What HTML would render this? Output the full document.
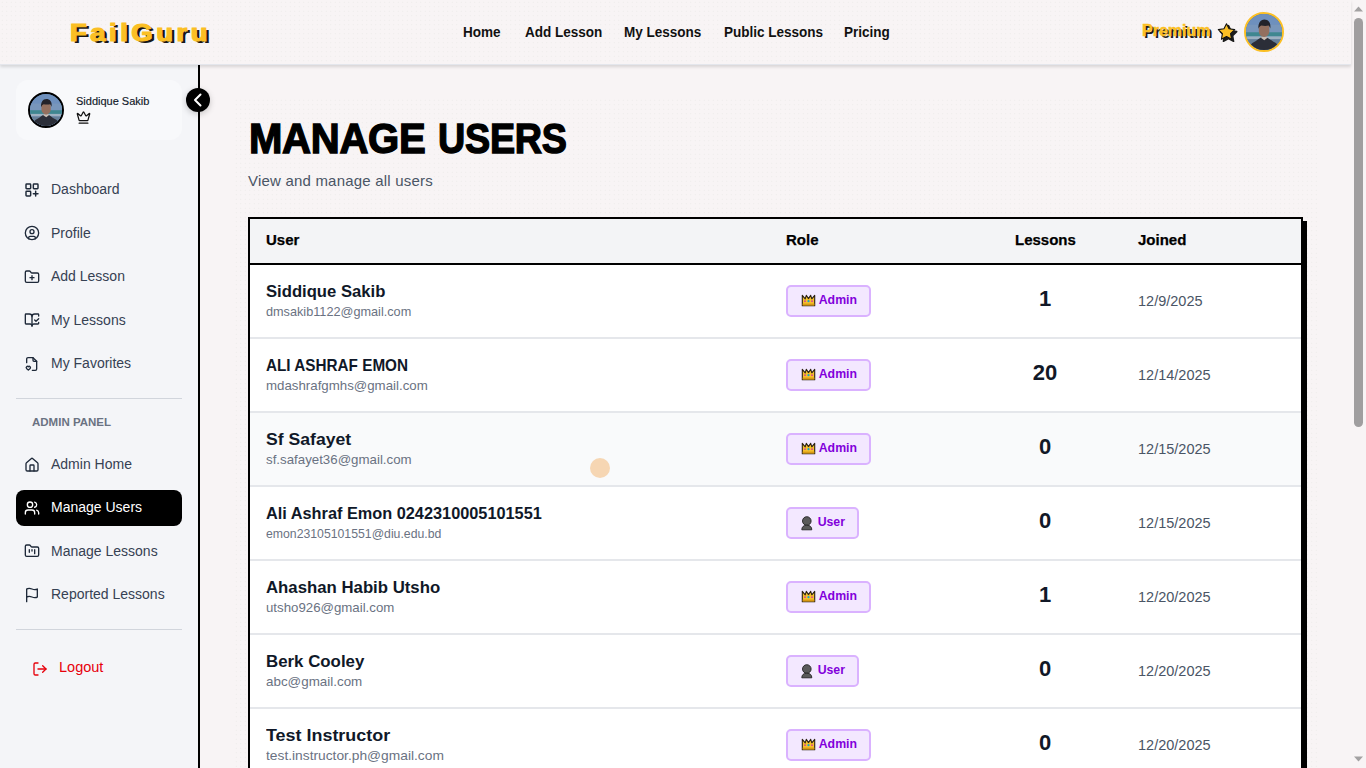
<!DOCTYPE html>
<html><head><meta charset="utf-8">
<style>
*{box-sizing:border-box;margin:0;padding:0}
html,body{width:1366px;height:768px;overflow:hidden;background:#f8f4f5;font-family:"Liberation Sans",sans-serif;color:#111827}
.dots{background-image:radial-gradient(circle at 50% 50%, rgba(0,0,0,0.05) 0.6px, transparent 0.9px);background-size:4.5px 4.5px}
#header{position:absolute;left:0;top:0;width:1351px;height:65px;background-color:#f8f4f5;border-bottom:1px solid #e4e6ec;box-shadow:0 2px 3px rgba(0,0,0,0.13);z-index:5}
#logo{position:absolute;left:70px;top:18px;font-size:24px;font-weight:bold;color:#fbbf24;letter-spacing:3px;text-shadow:2.5px 2px 0 #161616;line-height:30px;-webkit-text-stroke:1.1px #fbbf24;transform:scaleX(1.15);transform-origin:0 0;white-space:nowrap}
.nav{position:absolute;top:22.5px;font-size:14px;font-weight:bold;color:#111;line-height:18px;white-space:nowrap;transform:scaleX(0.965);transform-origin:0 0}
#premium{position:absolute;left:1142px;top:21px;font-size:16px;font-weight:bold;color:#fbbf24;text-shadow:2px 2px 0 #1a1a1a;line-height:20px;-webkit-text-stroke:0.4px #fbbf24}
#havatar{position:absolute;left:1244px;top:12px;width:40px;height:40px;border-radius:50%;border:2.5px solid #fbbf24;overflow:hidden;background:#4a6a8c}
#scroll{position:absolute;left:1351px;top:0;width:15px;height:768px;background:#f8f4f5}
#thumb{position:absolute;left:3px;top:18px;width:9px;height:409px;border-radius:5px;background:#a09e9f}
#sidebar{position:absolute;left:0;top:65px;width:198px;height:703px;background:#f4f5f8}
#sideline{position:absolute;left:198px;top:65px;width:2px;height:703px;background:#000;z-index:3}
#card{position:absolute;left:16px;top:15px;width:166px;height:60px;border-radius:12px;background:#f8f9fb}
#savatar{position:absolute;left:12px;top:12px;width:36px;height:36px;border-radius:50%;border:2px solid #000;overflow:hidden;background:#4a6a8c}
#sname{position:absolute;left:60px;top:15px;font-size:11px;color:#101828;-webkit-text-stroke:0.15px #101828;line-height:13px;white-space:nowrap}
#toggle{position:absolute;left:186px;top:88px;width:24px;height:24px;border-radius:50%;background:#000;z-index:6;box-shadow:0 2px 6px rgba(0,0,0,0.2)}
.item{position:absolute;left:16px;width:166px;height:36px;border-radius:8px;color:#364153;font-size:14px;line-height:35px;white-space:nowrap}
.item svg{position:absolute;left:8px;top:9.5px;width:16px;height:16px;color:#1e2939}
.item.active svg{color:#fff}
.item span{position:absolute;left:35px;top:0}
.item.active{background:#000;color:#fff}
.divider{position:absolute;left:16px;width:166px;height:1px;background:#d1d5dc}
#adminlbl{position:absolute;left:32px;top:350px;font-size:11.5px;font-weight:bold;color:#6a7282;line-height:14px;letter-spacing:0}
#main{position:absolute;left:200px;top:65px;width:1151px;height:703px}
#container{position:absolute;left:34px;top:33px;width:1084px;height:700px}
#title{position:absolute;left:249px;top:114px;font-size:42.5px;font-weight:bold;color:#000;letter-spacing:-0.3px;line-height:50px;white-space:nowrap;-webkit-text-stroke:1.4px #000;transform:scaleX(0.943);transform-origin:0 0}
#title2{position:absolute;left:438px;top:114px;font-size:42.5px;font-weight:bold;color:#000;letter-spacing:-0.3px;line-height:50px;white-space:nowrap;-webkit-text-stroke:1.4px #000;transform:scaleX(0.888);transform-origin:0 0}
#subtitle{position:absolute;left:248px;top:172px;font-size:15px;letter-spacing:0.2px;color:#4a5565;line-height:18px;white-space:nowrap}
#table{position:absolute;left:248px;top:217px;width:1055px;height:600px;border:2px solid #000;box-shadow:4px 4px 0 #000;background:#fff}
#thead{position:absolute;left:0;top:0;width:1051px;height:46px;background:#f3f4f6;border-bottom:2px solid #000}
.th{position:absolute;top:12px;font-size:15px;font-weight:bold;color:#000;-webkit-text-stroke:0.25px #000;line-height:18px}
.row{position:absolute;left:0;width:1051px;height:74px;border-bottom:2px solid #e5e7eb;background:#fff}
.row.hover{background:#f9fafb}
.uname{position:absolute;left:16px;top:16px;transform-origin:0 0;font-size:16.5px;font-weight:bold;color:#101828;line-height:20px;white-space:nowrap}
.email{position:absolute;left:16px;top:39px;transform-origin:0 0;font-size:12.7px;color:#6a7282;line-height:16px;white-space:nowrap}
.badge{position:absolute;left:536px;top:20px;height:32px;border:2px solid #dab2ff;border-radius:5px;background:#f3e8ff;color:#8200db;font-size:12.3px;font-weight:bold;line-height:28px;padding-left:13px;padding-right:12px;white-space:nowrap}
.badge svg{position:absolute;left:13px;top:7px}
.badge span{position:absolute;right:12px;top:-1px}
.num{position:absolute;left:718px;width:154px;top:22px;text-align:center;font-size:22px;font-weight:bold;color:#111827;line-height:24px}
.date{position:absolute;left:888px;top:26.5px;font-size:14.5px;color:#4a5565;line-height:18px;white-space:nowrap}
#cursor{position:absolute;left:590px;top:458px;width:20px;height:20px;border-radius:50%;background:#f6d6b3;z-index:10}
#crown{position:absolute;left:60px;top:30px;width:15px;height:15px;color:#111}
#logout{position:absolute;left:16px;top:586px;width:166px;height:36px;color:#e7000b;font-size:14.5px;line-height:36px}
#logout svg{position:absolute;left:16px;top:10px;width:16px;height:16px}
#logout span{position:absolute;left:43px;top:-2px}
</style></head>
<body>
<div id="header" class="dots">
  <div id="logo">FailGuru</div>
  <div class="nav" style="left:463px">Home</div>
  <div class="nav" style="left:525px">Add Lesson</div>
  <div class="nav" style="left:624px">My Lessons</div>
  <div class="nav" style="left:724px">Public Lessons</div>
  <div class="nav" style="left:844px">Pricing</div>
  <div id="premium">Premium</div>
  <svg style="position:absolute;left:1215px;top:20px" width="26" height="26" viewBox="0 0 26 26"><path transform="translate(2 2)" d="M11.50 3.70L14.03 8.82L19.68 9.64L15.59 13.63L16.55 19.26L11.50 16.60L6.45 19.26L7.41 13.63L3.32 9.64L8.97 8.82Z" fill="#1c1c1c" stroke="#1c1c1c" stroke-width="1.6" stroke-linejoin="round"/><path d="M11.50 3.70L14.03 8.82L19.68 9.64L15.59 13.63L16.55 19.26L11.50 16.60L6.45 19.26L7.41 13.63L3.32 9.64L8.97 8.82Z" fill="#fbbf24" stroke="#111" stroke-width="1.1" stroke-linejoin="round"/></svg>
  <div id="havatar"><svg width="100%" height="100%" viewBox="0 0 40 40" preserveAspectRatio="none"><rect width="40" height="40" fill="#6e90bd"/><rect y="12" width="40" height="9" fill="#7896bb"/><rect y="20.3" width="40" height="4.6" fill="#3f8790"/><rect y="24.9" width="40" height="3.2" fill="#9db1c1"/><rect y="28.1" width="40" height="11.9" fill="#667f97"/><path d="M3 40c.8-5 3-7.8 6.5-9.2 3-1.2 5.5-5.3 10.5-5.3s7.5 4 10.5 5.3c3.5 1.4 6 4.2 7 9.2z" fill="#2b2e38"/><path d="M16.5 26.5l3.8 2.6 3.6-2.7-1.4-1.2h-4.6z" fill="#c9bdb2"/><path d="M14.3 15c0-3 2.6-4.7 5.9-4.7s5.7 1.9 5.7 4.9v4.3c0 3.3-2.4 6-5.8 6s-5.8-2.8-5.8-6z" fill="#93705f"/><path d="M13.8 16.5c-.6-6 2.3-10.3 6.6-10.3 4.2 0 7.6 3.2 6.6 10-.5-1.5-1.1-3-2-3.4-1.8.6-5 .6-8 .1-1.4.6-2.5 1.8-3.2 3.6z" fill="#23232a"/></svg></div>
</div>
<div id="scroll"><svg style="position:absolute;left:3px;top:6px" width="9" height="6" viewBox="0 0 9 6"><path d="M0 5.5L4.5 0.5L9 5.5z" fill="#a3a1a2"/></svg><div id="thumb"></div><svg style="position:absolute;left:3px;top:756px" width="9" height="6" viewBox="0 0 9 6"><path d="M0 0.5L4.5 5.5L9 0.5z" fill="#a3a1a2"/></svg></div>

<div id="sidebar">
  <div id="card">
    <div id="savatar"><svg width="100%" height="100%" viewBox="0 0 40 40" preserveAspectRatio="none"><rect width="40" height="40" fill="#6e90bd"/><rect y="12" width="40" height="9" fill="#7896bb"/><rect y="20.3" width="40" height="4.6" fill="#3f8790"/><rect y="24.9" width="40" height="3.2" fill="#9db1c1"/><rect y="28.1" width="40" height="11.9" fill="#667f97"/><path d="M3 40c.8-5 3-7.8 6.5-9.2 3-1.2 5.5-5.3 10.5-5.3s7.5 4 10.5 5.3c3.5 1.4 6 4.2 7 9.2z" fill="#2b2e38"/><path d="M16.5 26.5l3.8 2.6 3.6-2.7-1.4-1.2h-4.6z" fill="#c9bdb2"/><path d="M14.3 15c0-3 2.6-4.7 5.9-4.7s5.7 1.9 5.7 4.9v4.3c0 3.3-2.4 6-5.8 6s-5.8-2.8-5.8-6z" fill="#93705f"/><path d="M13.8 16.5c-.6-6 2.3-10.3 6.6-10.3 4.2 0 7.6 3.2 6.6 10-.5-1.5-1.1-3-2-3.4-1.8.6-5 .6-8 .1-1.4.6-2.5 1.8-3.2 3.6z" fill="#23232a"/></svg></div>
    <div id="sname">Siddique Sakib</div>
    <svg id="crown" viewBox="0 0 24 24" fill="none" stroke="currentColor" stroke-width="2" stroke-linecap="round" stroke-linejoin="round"><path d="M11.562 3.266a.5.5 0 0 1 .876 0L15.39 8.87a1 1 0 0 0 1.516.294L21.183 5.5a.5.5 0 0 1 .798.519l-2.834 10.246a1 1 0 0 1-.956.734H5.81a1 1 0 0 1-.957-.734L2.02 6.02a.5.5 0 0 1 .798-.519l4.276 3.664a1 1 0 0 0 1.516-.294z"/><path d="M5 21h14"/></svg>
  </div>
  <div class="item" style="top:107px"><svg viewBox="0 0 24 24" fill="none" stroke="currentColor" stroke-width="2.2" stroke-linecap="round" stroke-linejoin="round"><rect x="3" y="3" width="7" height="7" rx="1"/><rect x="14" y="3" width="7" height="7" rx="1"/><rect x="3" y="14" width="7" height="7" rx="1"/><path d="M17.5 14v7M14 17.5h7"/></svg><span>Dashboard</span></div>
  <div class="item" style="top:150.55px"><svg viewBox="0 0 24 24" fill="none" stroke="currentColor" stroke-width="2" stroke-linecap="round" stroke-linejoin="round"><circle cx="12" cy="12" r="10"/><circle cx="12" cy="10" r="3"/><path d="M7 20.662V19a2 2 0 0 1 2-2h6a2 2 0 0 1 2 2v1.662"/></svg><span>Profile</span></div>
  <div class="item" style="top:194.10000000000002px"><svg viewBox="0 0 24 24" fill="none" stroke="currentColor" stroke-width="2" stroke-linecap="round" stroke-linejoin="round"><path d="M12 10v6"/><path d="M9 13h6"/><path d="M20 20a2 2 0 0 0 2-2V8a2 2 0 0 0-2-2h-7.9a2 2 0 0 1-1.69-.9L9.6 3.9A2 2 0 0 0 7.930 3H4a2 2 0 0 0-2 2v13a2 2 0 0 0 2 2Z"/></svg><span>Add Lesson</span></div>
  <div class="item" style="top:237.64999999999998px"><svg viewBox="0 0 24 24" fill="none" stroke="currentColor" stroke-width="2" stroke-linecap="round" stroke-linejoin="round"><path d="M12 21V7"/><path d="m16 12 2 2 4-4"/><path d="M22 6V4a1 1 0 0 0-1-1h-5a4 4 0 0 0-4 4 4 4 0 0 0-4-4H3a1 1 0 0 0-1 1v13a1 1 0 0 0 1 1h6a3 3 0 0 1 3 3 3 3 0 0 1 3-3h6a1 1 0 0 0 1-1v-1.3"/></svg><span>My Lessons</span></div>
  <div class="item" style="top:281.2px"><svg viewBox="0 0 24 24" fill="none" stroke="currentColor" stroke-width="2" stroke-linecap="round" stroke-linejoin="round"><path d="M4 10V4.5a2 2 0 0 1 2-2h7.5L19 8v11.5a2 2 0 0 1-2 2h-4.5"/><path d="M13.5 2.5V6.5a1.5 1.5 0 0 0 1.5 1.5h4"/><path d="M6.5 21.2l-2.7-2.6a1.8 1.8 0 0 1 2.7-2.4 1.8 1.8 0 0 1 2.7 2.4z"/></svg><span>My Favorites</span></div>
  <div class="item" style="top:382px"><svg viewBox="0 0 24 24" fill="none" stroke="currentColor" stroke-width="2" stroke-linecap="round" stroke-linejoin="round"><path d="M15 21v-8a1 1 0 0 0-1-1h-4a1 1 0 0 0-1 1v8"/><path d="M3 10a2 2 0 0 1 .709-1.528l7-5.999a2 2 0 0 1 2.582 0l7 5.999A2 2 0 0 1 21 10v9a2 2 0 0 1-2 2H5a2 2 0 0 1-2-2z"/></svg><span>Admin Home</span></div>
  <div class="item active" style="top:425px"><svg viewBox="0 0 24 24" fill="none" stroke="currentColor" stroke-width="2" stroke-linecap="round" stroke-linejoin="round"><path d="M16 21v-2a4 4 0 0 0-4-4H6a4 4 0 0 0-4 4v2"/><circle cx="9" cy="7" r="4"/><path d="M22 21v-2a4 4 0 0 0-3-3.87"/><path d="M16 3.13a4 4 0 0 1 0 7.75"/></svg><span>Manage Users</span></div>
  <div class="item" style="top:468.5px"><svg viewBox="0 0 24 24" fill="none" stroke="currentColor" stroke-width="2" stroke-linecap="round" stroke-linejoin="round"><path d="M4 20h16a2 2 0 0 0 2-2V8a2 2 0 0 0-2-2h-7.93a2 2 0 0 1-1.66-.9l-.82-1.2A2 2 0 0 0 7.93 3H4a2 2 0 0 0-2 2v13c0 1.1.9 2 2 2Z"/><path d="M8 10v4"/><path d="M12 10v2"/><path d="M16 10v6"/></svg><span>Manage Lessons</span></div>
  <div class="item" style="top:512px"><svg viewBox="0 0 24 24" fill="none" stroke="currentColor" stroke-width="2" stroke-linecap="round" stroke-linejoin="round"><path d="M4 15s1-1 4-1 5 2 8 2 4-1 4-1V3s-1 1-4 1-5-2-8-2-4 1-4 1z"/><path d="M4 22v-7"/></svg><span>Reported Lessons</span></div>
  <div class="divider" style="top:333px"></div>
  <div id="adminlbl">ADMIN PANEL</div>
  <div class="divider" style="top:564px"></div>
  <div id="logout"><svg viewBox="0 0 24 24" fill="none" stroke="currentColor" stroke-width="2" stroke-linecap="round" stroke-linejoin="round"><path d="m16 17 5-5-5-5"/><path d="M21 12H9"/><path d="M9 21H5a2 2 0 0 1-2-2V5a2 2 0 0 1 2-2h4"/></svg><span>Logout</span></div>
</div>
<div id="sideline"></div>
<div id="toggle"><svg width="24" height="24" viewBox="0 0 24 24"><path d="M14.5 6.5L9 12l5.5 5.5" fill="none" stroke="#fff" stroke-width="2" stroke-linecap="round" stroke-linejoin="round"/></svg></div>

<div id="main">
  <div id="container" class="dots"></div>
</div>
<div id="title">MANAGE</div><div id="title2">USERS</div>
<div id="subtitle">View and manage all users</div>
<div id="table">
  <div id="thead">
    <div class="th" style="left:16px">User</div>
    <div class="th" style="left:536px">Role</div>
    <div class="th" style="left:765px">Lessons</div>
    <div class="th" style="left:888px">Joined</div>
  </div>
  <div class="row" style="top:46px"><div class="uname" style="transform:scaleX(1.009)">Siddique Sakib</div><div class="email" style="transform:scaleX(1.000)">dmsakib1122@gmail.com</div><div class="badge" style="width:85px"><svg width="15" height="13" viewBox="0 0 15 13"><path d="M1.3 1.3L4.2 4.8 5.3 1.3 7.5 4.6 9.7 1.3 10.8 4.8 13.7 1.3 13.7 11.7H1.3z" fill="#f6c02c" stroke="#2a2010" stroke-width="1.1" stroke-linejoin="round"/><path d="M1.6 9.6h11.8v1.9H1.6z" fill="#d99a12"/><circle cx="4" cy="7.2" r=".9" fill="#d63c9a"/><circle cx="7.5" cy="7.2" r="1.1" fill="#19a3c7"/><circle cx="11" cy="7.2" r=".9" fill="#d63c9a"/></svg><span>Admin</span></div><div class="num">1</div><div class="date">12/9/2025</div></div>
  <div class="row" style="top:120px"><div class="uname" style="transform:scaleX(0.926)">ALI ASHRAF EMON</div><div class="email" style="transform:scaleX(1.046)">mdashrafgmhs@gmail.com</div><div class="badge" style="width:85px"><svg width="15" height="13" viewBox="0 0 15 13"><path d="M1.3 1.3L4.2 4.8 5.3 1.3 7.5 4.6 9.7 1.3 10.8 4.8 13.7 1.3 13.7 11.7H1.3z" fill="#f6c02c" stroke="#2a2010" stroke-width="1.1" stroke-linejoin="round"/><path d="M1.6 9.6h11.8v1.9H1.6z" fill="#d99a12"/><circle cx="4" cy="7.2" r=".9" fill="#d63c9a"/><circle cx="7.5" cy="7.2" r="1.1" fill="#19a3c7"/><circle cx="11" cy="7.2" r=".9" fill="#d63c9a"/></svg><span>Admin</span></div><div class="num">20</div><div class="date">12/14/2025</div></div>
  <div class="row hover" style="top:194px"><div class="uname" style="transform:scaleX(1.067)">Sf Safayet</div><div class="email" style="transform:scaleX(1.047)">sf.safayet36@gmail.com</div><div class="badge" style="width:85px"><svg width="15" height="13" viewBox="0 0 15 13"><path d="M1.3 1.3L4.2 4.8 5.3 1.3 7.5 4.6 9.7 1.3 10.8 4.8 13.7 1.3 13.7 11.7H1.3z" fill="#f6c02c" stroke="#2a2010" stroke-width="1.1" stroke-linejoin="round"/><path d="M1.6 9.6h11.8v1.9H1.6z" fill="#d99a12"/><circle cx="4" cy="7.2" r=".9" fill="#d63c9a"/><circle cx="7.5" cy="7.2" r="1.1" fill="#19a3c7"/><circle cx="11" cy="7.2" r=".9" fill="#d63c9a"/></svg><span>Admin</span></div><div class="num">0</div><div class="date">12/15/2025</div></div>
  <div class="row" style="top:268px"><div class="uname" style="transform:scaleX(0.988)">Ali Ashraf Emon 0242310005101551</div><div class="email" style="transform:scaleX(0.966)">emon23105101551@diu.edu.bd</div><div class="badge" style="width:73px"><svg width="12" height="15" viewBox="0 0 12 15"><circle cx="5.8" cy="5" r="4.3" fill="#5a5a5a" stroke="#222" stroke-width="0.9"/><path d="M0.8 13.8c0-2.8 1.6-4.6 5-4.6s5 1.8 5 4.6z" fill="#5a5a5a" stroke="#222" stroke-width="0.9" stroke-linejoin="round"/></svg><span>User</span></div><div class="num">0</div><div class="date">12/15/2025</div></div>
  <div class="row" style="top:342px"><div class="uname" style="transform:scaleX(1.016)">Ahashan Habib Utsho</div><div class="email" style="transform:scaleX(1.044)">utsho926@gmail.com</div><div class="badge" style="width:85px"><svg width="15" height="13" viewBox="0 0 15 13"><path d="M1.3 1.3L4.2 4.8 5.3 1.3 7.5 4.6 9.7 1.3 10.8 4.8 13.7 1.3 13.7 11.7H1.3z" fill="#f6c02c" stroke="#2a2010" stroke-width="1.1" stroke-linejoin="round"/><path d="M1.6 9.6h11.8v1.9H1.6z" fill="#d99a12"/><circle cx="4" cy="7.2" r=".9" fill="#d63c9a"/><circle cx="7.5" cy="7.2" r="1.1" fill="#19a3c7"/><circle cx="11" cy="7.2" r=".9" fill="#d63c9a"/></svg><span>Admin</span></div><div class="num">1</div><div class="date">12/20/2025</div></div>
  <div class="row" style="top:416px"><div class="uname" style="transform:scaleX(1.021)">Berk Cooley</div><div class="email" style="transform:scaleX(1.056)">abc@gmail.com</div><div class="badge" style="width:73px"><svg width="12" height="15" viewBox="0 0 12 15"><circle cx="5.8" cy="5" r="4.3" fill="#5a5a5a" stroke="#222" stroke-width="0.9"/><path d="M0.8 13.8c0-2.8 1.6-4.6 5-4.6s5 1.8 5 4.6z" fill="#5a5a5a" stroke="#222" stroke-width="0.9" stroke-linejoin="round"/></svg><span>User</span></div><div class="num">0</div><div class="date">12/20/2025</div></div>
  <div class="row" style="top:490px"><div class="uname" style="transform:scaleX(1.086)">Test Instructor</div><div class="email" style="transform:scaleX(1.086)">test.instructor.ph@gmail.com</div><div class="badge" style="width:85px"><svg width="15" height="13" viewBox="0 0 15 13"><path d="M1.3 1.3L4.2 4.8 5.3 1.3 7.5 4.6 9.7 1.3 10.8 4.8 13.7 1.3 13.7 11.7H1.3z" fill="#f6c02c" stroke="#2a2010" stroke-width="1.1" stroke-linejoin="round"/><path d="M1.6 9.6h11.8v1.9H1.6z" fill="#d99a12"/><circle cx="4" cy="7.2" r=".9" fill="#d63c9a"/><circle cx="7.5" cy="7.2" r="1.1" fill="#19a3c7"/><circle cx="11" cy="7.2" r=".9" fill="#d63c9a"/></svg><span>Admin</span></div><div class="num">0</div><div class="date">12/20/2025</div></div>
</div>
<div id="cursor"></div>
</body></html>
